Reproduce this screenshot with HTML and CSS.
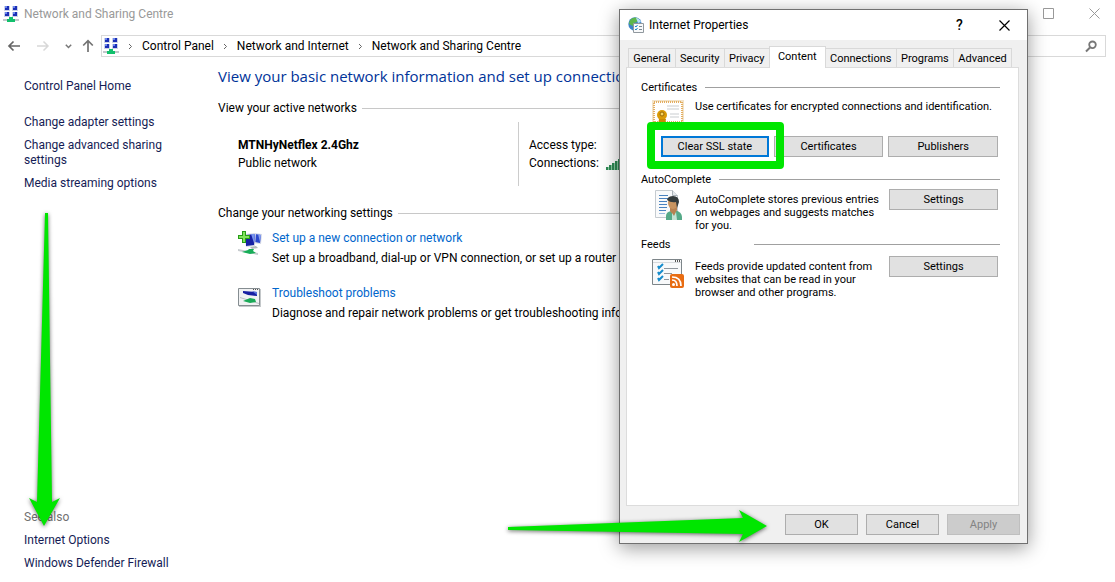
FILE: index.html
```html
<!DOCTYPE html>
<html lang="en">
<head>
    <meta charset="UTF-8">
    <meta name="viewport" content="width=device-width, initial-scale=1.0">
    <title>Network and Sharing Centre</title>
    <link rel="stylesheet" href="styles.css">
</head>
<body>
    <svg class="symbols" aria-hidden="true">
        <symbol id="network" viewBox="0 0 16 16">
            <path d="M1 0h6v5H1zM9 0h6v5H9zM1 6h6v5H1zM9 6h6v5H9z" fill="#ccd3e6"/>
            <path d="M2 0h4v4H2zM10 0h4v4h-4zM2 6h4v4H2zM10 6h4v4h-4z" fill="#1c2fb5"/>
            <path d="M2 0h2v2H2zM10 0h2v2h-2zM2 6h2v2H2zM10 6h2v2h-2z" fill="#6a86ee"/>
            <path d="M0 13h16v2H0z" fill="#c3c8cc"/>
            <path d="M6 11h4v2h2v3H4v-3h2z" fill="#12c06c"/>
        </symbol>
    </svg>

    <div class="window">
        <header class="titlebar">
            <svg class="icon16"><use href="#network"/></svg>
            <span class="title">Network and Sharing Centre</span>
            <button class="win-btn" aria-label="Maximise">
                <svg width="11" height="11" viewBox="0 0 11 11"><path d="M.5.5h10v10H.5z" fill="none" stroke="#999"/></svg>
            </button>
            <button class="win-btn" aria-label="Close">
                <svg width="11" height="11" viewBox="0 0 11 11"><path d="M.5.5l10 10M10.500.5l-10 10" fill="none" stroke="#999"/></svg>
            </button>
        </header>

        <nav class="navbar">
            <div class="nav-buttons">
                <button aria-label="Back"><svg width="14" height="12" viewBox="0 0 14 12"><path d="M13 6H2M6.500 1.500L2 6l4.500 4.500" fill="none" stroke="#666" stroke-width="1.700"/></svg></button>
                <button aria-label="Forward" disabled><svg width="14" height="12" viewBox="0 0 14 12"><path d="M1 6h11M7.500 1.500L12 6l-4.500 4.500" fill="none" stroke="#d8d8d8" stroke-width="1.500"/></svg></button>
                <button class="small" aria-label="Recent"><svg width="7" height="5" viewBox="0 0 7 5"><path d="M.8.8l2.700 2.700L6.200.8" fill="none" stroke="#777" stroke-width="1.500"/></svg></button>
                <button aria-label="Up"><svg width="12" height="14" viewBox="0 0 12 14"><path d="M6 13V2M1.200 6.500L6 1.700l4.800 4.800" fill="none" stroke="#737373" stroke-width="1.700"/></svg></button>
            </div>
            <div class="address">
                <svg class="icon16"><use href="#network"/></svg>
                <svg class="sep" viewBox="0 0 5 7"><path d="M1 1l2.500 2.500L1 6"/></svg>
                <a href="#">Control Panel</a>
                <svg class="sep" viewBox="0 0 5 7"><path d="M1 1l2.500 2.500L1 6"/></svg>
                <a href="#">Network and Internet</a>
                <svg class="sep" viewBox="0 0 5 7"><path d="M1 1l2.500 2.500L1 6"/></svg>
                <a href="#">Network and Sharing Centre</a>
            </div>
            <div class="search">
                <input type="search" aria-label="Search Control Panel">
                <svg width="13" height="13" viewBox="0 0 13 13"><circle cx="7.500" cy="4.800" r="3.300" fill="none" stroke="#777" stroke-width="1.800"/><path d="M5 7.500L1 11.500" stroke="#777" stroke-width="2"/></svg>
            </div>
        </nav>

        <div class="content">
            <aside class="sidebar">
                <a class="home" href="#">Control Panel Home</a>
                <a href="#">Change adapter settings</a>
                <a href="#">Change advanced sharing settings</a>
                <a href="#">Media streaming options</a>
                <span class="see-also">See also</span>
                <a href="#">Internet Options</a>
                <a href="#">Windows Defender Firewall</a>
            </aside>

            <main class="main">
                <h1>View your basic network information and set up connections</h1>
                <h2 class="rule">View your active networks</h2>
                <div class="network">
                    <div class="network-name">
                        <strong>MTNHyNetflex 2.4Ghz</strong>
                        <span>Public network</span>
                    </div>
                    <div class="network-info">
                        <span>Access type:</span>
                        <span class="connections">Connections:
                            <svg width="20" height="13" viewBox="0 0 20 13"><path d="M0 10h2v3H0zM3 8h2v5H3zM6 6h2v7H6zM9 4h2v9H9zM12 2h2v11h-2zM15 0h2v13h-2z" fill="#2f8a55"/><path d="M2 10h1v3H2zM5 8h1v5H5zM8 6h1v7H8zM11 4h1v9h-1zM14 2h1v11h-1z" fill="#8ccca4"/></svg>
                        </span>
                    </div>
                </div>

                <h2 class="rule">Change your networking settings</h2>
                <div class="task">
                    <svg width="24" height="24" viewBox="0 0 24 24">
                        <path d="M15 2l9 1-1 10-8-1z" fill="#d5d9e6"/>
                        <path d="M17 3l6 1-1 8-5-1z" fill="#2b48ce"/>
                        <path d="M20 3l3 1-1 7z" fill="#8aa2f0"/>
                        <path d="M6 3l12-1-1 13-9 1z" fill="#d9dce8"/>
                        <path d="M8 4l9-1-1 11-8 1z" fill="#1720a4"/>
                        <path d="M13 3l4 0-1 9z" fill="#7793ee"/>
                        <path d="M12 16l6-1 2 2-6 1z" fill="#b4b9bd"/>
                        <path d="M0 18l20 4v2L0 20z" fill="#c7cccf"/>
                        <path d="M4 21l6-2 1-1 5 0-1 2 3 2-6 1z" fill="#18ad58"/>
                        <path d="M4 0h4v4h4v4H8v4H4V8H0V4h4z" fill="#279c18"/>
                        <path d="M5 1h2v4h4v2H7v4H5V7H1V5h4z" fill="#80e45b"/>
                    </svg>
                    <div>
                        <a href="#">Set up a new connection or network</a>
                        <p>Set up a broadband, dial-up or VPN connection, or set up a router or access point.</p>
                    </div>
                </div>
                <div class="task">
                    <svg width="24" height="24" viewBox="0 0 24 24">
                        <path d="M1 3h22v18H1z" fill="#c4c8ca"/>
                        <path d="M.5 2.500h21v17H.5z" fill="#f1f2f3" stroke="#858d91"/>
                        <path d="M15 3h1v1h-1zM17 3h1v1h-1zM19 3h1v1h-1z" fill="#555"/>
                        <path d="M5 5l14 1v4l-9-1-5-2z" fill="#1820a3"/>
                        <path d="M14 5l5 1v3z" fill="#5873dc"/>
                        <path d="M2 11l19 6v1L2 12z" fill="#b9c0c4"/>
                        <path d="M5 15l7-3 5 1 1 3-6 1z" fill="#1aa957"/>
                    </svg>
                    <div>
                        <a href="#">Troubleshoot problems</a>
                        <p>Diagnose and repair network problems or get troubleshooting information.</p>
                    </div>
                </div>
            </main>
        </div>
    </div>

    <section class="dialog" role="dialog" aria-labelledby="dialog-title">
        <header class="dialog-title">
            <svg class="icon16" viewBox="0 0 16 16">
                <circle cx="7" cy="7" r="6.700" fill="#3d83c9"/>
                <path d="M3 2Q7-1 11 2L9 5 6 6 5 9 1 7Q1 4 3 2z" fill="#5eb74a"/>
                <path d="M8 1q3 0 5 4l-3 1z" fill="#b8e0f8"/>
                <path d="M5.500 6.500h10v9h-10z" fill="#f8f9fa" stroke="#90989e"/>
                <path d="M7 9l1 1 1.500-2M7 12l1 1 1.500-2" fill="none" stroke="#1b8acb"/>
                <path d="M11 9.500h3M11 12.500h3" stroke="#7c8a94"/>
            </svg>
            <span id="dialog-title">Internet Properties</span>
            <button class="help" aria-label="Help">?</button>
            <button aria-label="Close"><svg width="11" height="11" viewBox="0 0 11 11"><path d="M.5.5l10 10M10.500.5l-10 10" fill="none" stroke="#000" stroke-width="1.200"/></svg></button>
        </header>

        <div class="dialog-body">
            <div class="tabs" role="tablist">
                <button role="tab">General</button>
                <button role="tab">Security</button>
                <button role="tab">Privacy</button>
                <button role="tab" class="active" aria-selected="true">Content</button>
                <button role="tab">Connections</button>
                <button role="tab">Programs</button>
                <button role="tab">Advanced</button>
            </div>

            <div class="panel" role="tabpanel">
                <h3 class="rule">Certificates</h3>
                <div class="certificates">
                    <svg width="32" height="32" viewBox="0 0 32 32">
                        <path d="M0 0h32v24H0z" fill="#f3e3c8"/>
                        <path d="M2 2h28v20H2z" fill="#fff" stroke="#e3ae62" stroke-width="2" stroke-dasharray="1 1"/>
                        <path d="M15 6h12M15 9h12M18 14h9M18 17h9" stroke="#c9cdd0"/>
                        <circle cx="10" cy="15" r="5" fill="#d99a08"/>
                        <circle cx="10" cy="14" r="2" fill="#f6d463" stroke="#9b6905"/>
                        <path d="M7 19l-1 6 4-2 3 2 1-6z" fill="#c98906"/>
                    </svg>
                    <p>Use certificates for encrypted connections and identification.</p>
                </div>
                <div class="cert-buttons">
                    <div class="marked"><button class="btn default">Clear SSL state</button></div>
                    <button class="btn">Certificates</button>
                    <button class="btn">Publishers</button>
                </div>

                <h3 class="rule">AutoComplete</h3>
                <div class="option">
                    <svg width="32" height="32" viewBox="0 0 32 32">
                        <path d="M3.500 1.500h17l5 5v22h-22z" fill="#f9fafb" stroke="#c5cbd0"/>
                        <path d="M20.500 1.500v5h5" fill="#e4e8eb" stroke="#aab2b8"/>
                        <path d="M7 6.500h9M7 9.500h9M7 12.500h8M7 15.500h8M7 18.500h8M7 21.500h7" stroke="#4a83c0"/>
                        <path d="M7 24.500h6" stroke="#9cbcdf"/>
                        <path d="M14 31v-4q0-4 5-5l4-1q7 2 7 7v3z" fill="#56aa88"/>
                        <path d="M18 22l4 5 3-6v-4h-7z" fill="#b88252"/>
                        <path d="M20 24l2 3 2-4 1 8h-5z" fill="#c5e3d4"/>
                        <ellipse cx="21" cy="14" rx="5" ry="6" fill="#c99460"/>
                        <path d="M15 14q-1-7 6-7 6 0 6 6l-2 6-1-6q-5 1-9-2z" fill="#343b3c"/>
                    </svg>
                    <p>AutoComplete stores previous entries on webpages and suggests matches for you.</p>
                    <button class="btn">Settings</button>
                </div>

                <h3 class="rule feeds">Feeds</h3>
                <div class="option">
                    <svg width="32" height="32" viewBox="0 0 32 32">
                        <path d="M.5 3.500h29v25H.5z" fill="#f8f9fa" stroke="#7d8589"/>
                        <path d="M23 4h1v2h-1zM25 4h1v2h-1zM27 4h1v2h-1z" fill="#555"/>
                        <path d="M1 6.500h28" stroke="#d7dadd"/>
                        <path d="M6 10l1 2 4-4M6 16l1 2 4-4M6 22l1 2 4-4" fill="none" stroke="#168ccc" stroke-width="2"/>
                        <path d="M12 12.500h14M12 17.500h8M12 23.500h5" stroke="#8f969d"/>
                        <rect x="18" y="18" width="14" height="14" rx="2" fill="#e86c12"/>
                        <circle cx="21.500" cy="28.500" r="1.500" fill="#fff"/>
                        <path d="M20 24q5 0 5 6M20 21q9 0 9 9" fill="none" stroke="#fff" stroke-width="1.700"/>
                    </svg>
                    <p>Feeds provide updated content from websites that can be read in your browser and other programs.</p>
                    <button class="btn">Settings</button>
                </div>
            </div>

            <footer class="dialog-footer">
                <button class="btn">OK</button>
                <button class="btn">Cancel</button>
                <button class="btn" disabled>Apply</button>
            </footer>
        </div>
    </section>

    <!-- arrows over the windows -->
    <svg class="arrow arrow-down" width="44" height="320" viewBox="0 0 44 320"><path d="M25 3h3l4 289 8-4-16 28L9 288l8 4z"/></svg>
    <svg class="arrow arrow-right" width="266" height="42" viewBox="0 0 266 42"><path d="M3 21l235-9-4-8 28 16-28 16 4-8L3 24z"/></svg>
</body>
</html>
```
FILE: styles.css
```css
* {
    box-sizing: border-box;
}

body {
    margin: 0;
    font-family: Roboto, "Noto Sans", sans-serif;
    font-size: 12px;
    line-height: 15px;
    color: #000;
    background-color: #fff;
    position: relative;
    overflow: hidden;
}

h1, h2, h3, p {
    margin: 0;
    font-weight: normal;
}

h2, h3 {
    font-size: inherit;
}

a {
    text-decoration: none;
}

svg {
    flex: none;
}

button {
    font: inherit;
    color: inherit;
    background: none;
    border: none;
    padding: 0;
}

.symbols {
    position: absolute;
    width: 0;
    height: 0;
}

.icon16 {
    width: 16px;
    height: 16px;
}

.window {
    min-height: 100vh;
    display: flex;
    flex-direction: column;
}

.titlebar {
    display: flex;
    align-items: center;
    height: 27px;
    margin-right: -2px;
    padding-left: 3px;
    color: #999;
}

.title {
    flex: 1;
    padding: 1px 0 0 5px;
}

.win-btn {
    width: 46px;
    height: 27px;
    display: flex;
    align-items: center;
    justify-content: center;
}

.navbar {
    display: flex;
    align-items: center;
    padding: 8px 9px 0 7px;
}

.nav-buttons {
    display: flex;
    align-items: center;
    gap: 15px;
    width: 94px;
}

.nav-buttons button {
    display: flex;
}

.nav-buttons .small {
    margin-right: -5px;
}

.address {
    flex: 1;
    display: flex;
    align-items: center;
    gap: 9px;
    height: 22px;
    padding-left: 1px;
    border: 1px solid #d9d9d9;
}

.address a {
    color: #000;
}

.sep {
    width: 5px;
    height: 7px;
    fill: none;
    stroke: #666;
}

.search {
    display: flex;
    align-items: center;
    width: 200px;
    height: 22px;
    margin-left: 10px;
    padding-right: 7px;
    border: 1px solid #d9d9d9;
}

.search input {
    flex: 1;
    min-width: 0;
    border: none;
    outline: none;
    background: none;
}

.content {
    flex: 1;
    display: flex;
}

.sidebar {
    width: 218px;
    display: flex;
    flex-direction: column;
    gap: 8px;
    padding: 22px 40px 11px 24px;
}

.sidebar a {
    color: #151c55;
}

.sidebar .home {
    margin-bottom: 13px;
}

.see-also {
    margin-top: auto;
    color: #707070;
}

.main {
    flex: 1;
    min-width: 0;
    max-width: 760px;
    padding-top: 9px;
    white-space: nowrap;
}

.main h1 {
    font-family: "Open Sans", sans-serif;
    font-size: 15px;
    line-height: 20px;
    color: #003399;
    margin-bottom: 15px;
}

.rule {
    display: flex;
    align-items: center;
    gap: 5px;
}

.rule::after {
    content: "";
    flex: 1;
    height: 1px;
    background-color: #c8c8c8;
}

.network {
    display: flex;
    margin: 6px 0 20px 20px;
}

.network-name, .network-info {
    display: flex;
    flex-direction: column;
    gap: 3px;
    height: 64px;
    padding-top: 16px;
}

.network-name {
    width: 280px;
}

.network-info {
    border-left: 1px solid #ccc;
    padding-left: 10px;
}

.connections {
    display: flex;
    align-items: center;
    gap: 7px;
}

.task {
    display: flex;
    gap: 10px;
    padding: 10px 0 10px 20px;
}

.task a {
    color: #0066cc;
}

.task p {
    margin-top: 5px;
}

.dialog {
    position: absolute;
    left: 619px;
    top: 9px;
    width: 409px;
    border: 1px solid #707070;
    background-color: #f0f0f0;
    box-shadow: 0 4px 18px rgba(0, 0, 0, 0.4);
}

.dialog-title {
    display: flex;
    align-items: center;
    height: 30px;
    padding-left: 8px;
    background-color: #fff;
}

.dialog-title span {
    flex: 1;
    padding-left: 5px;
}

.dialog-title button {
    width: 45px;
    height: 30px;
    display: flex;
    align-items: center;
    justify-content: center;
}

.dialog-title .help {
    font-size: 14px;
    font-weight: 500;
}

.dialog-body {
    padding: 6px 7px 8px 6px;
    font-size: 11px;
    line-height: 13px;
}

.tabs {
    display: flex;
    align-items: flex-end;
    padding: 0 8px 0 2px;
}

.tabs button {
    flex: 1 1 auto;
    height: 19px;
    padding-top: 1px;
    border: 1px solid #d9d9d9;
    border-left-width: 0;
    border-bottom: none;
}

.tabs button:first-child {
    border-left-width: 1px;
}

.tabs .active {
    height: 22px;
    margin: 0 0 -1px -1px;
    padding: 0 4px 2px;
    border-left-width: 1px;
    background-color: #fff;
    position: relative;
}

.panel {
    min-height: 439px;
    margin-right: 1px;
    padding: 13px 18px 12px 14px;
    border: 1px solid #dcdcdc;
    background-color: #fff;
}

.panel .rule {
    gap: 8px;
}

.panel .rule::after {
    background-color: #a0a0a0;
}

.panel .feeds {
    gap: 83px;
    margin-bottom: 2px;
}

.certificates {
    display: flex;
    gap: 11px;
    height: 33px;
    padding: 6px 0 0 11px;
}

.cert-buttons {
    display: flex;
    gap: 5px;
    padding: 9px 2px 0 20px;
    margin-bottom: 16px;
}

.cert-buttons > * {
    flex: 1;
}

.btn {
    height: 21px;
    border: 1px solid #adadad;
    background-color: #e1e1e1;
}

.btn.default {
    width: 100%;
    border: 2px solid #0078d7;
}

.btn:disabled {
    color: #838383;
    background-color: #ccc;
    border-color: #bfbfbf;
}

/* green frame round the button */
.marked {
    position: relative;
    z-index: 1;
    display: flex;
}

.marked::after {
    content: "";
    position: absolute;
    inset: -14px -15px -12px -14px;
    border: 8px solid #00e600;
    border-radius: 4px;
    pointer-events: none;
}

.option {
    display: flex;
    gap: 11px;
    padding: 3px 2px 0 11px;
    margin-bottom: 6px;
}

.option p {
    flex: 1;
    margin-right: -8px;
    padding-top: 4px;
}

.option .btn {
    width: 109px;
}

.dialog-footer {
    display: flex;
    justify-content: flex-end;
    gap: 8px;
    padding-top: 8px;
}

.dialog-footer .btn {
    width: 73px;
}

.arrow {
    position: absolute;
    fill: #00e600;
    pointer-events: none;
    filter: drop-shadow(0 1px 2px rgba(0, 0, 0, 0.6));
}

.arrow-down {
    left: 20px;
    top: 210px;
}

.arrow-right {
    left: 505px;
    top: 506px;
}
```
